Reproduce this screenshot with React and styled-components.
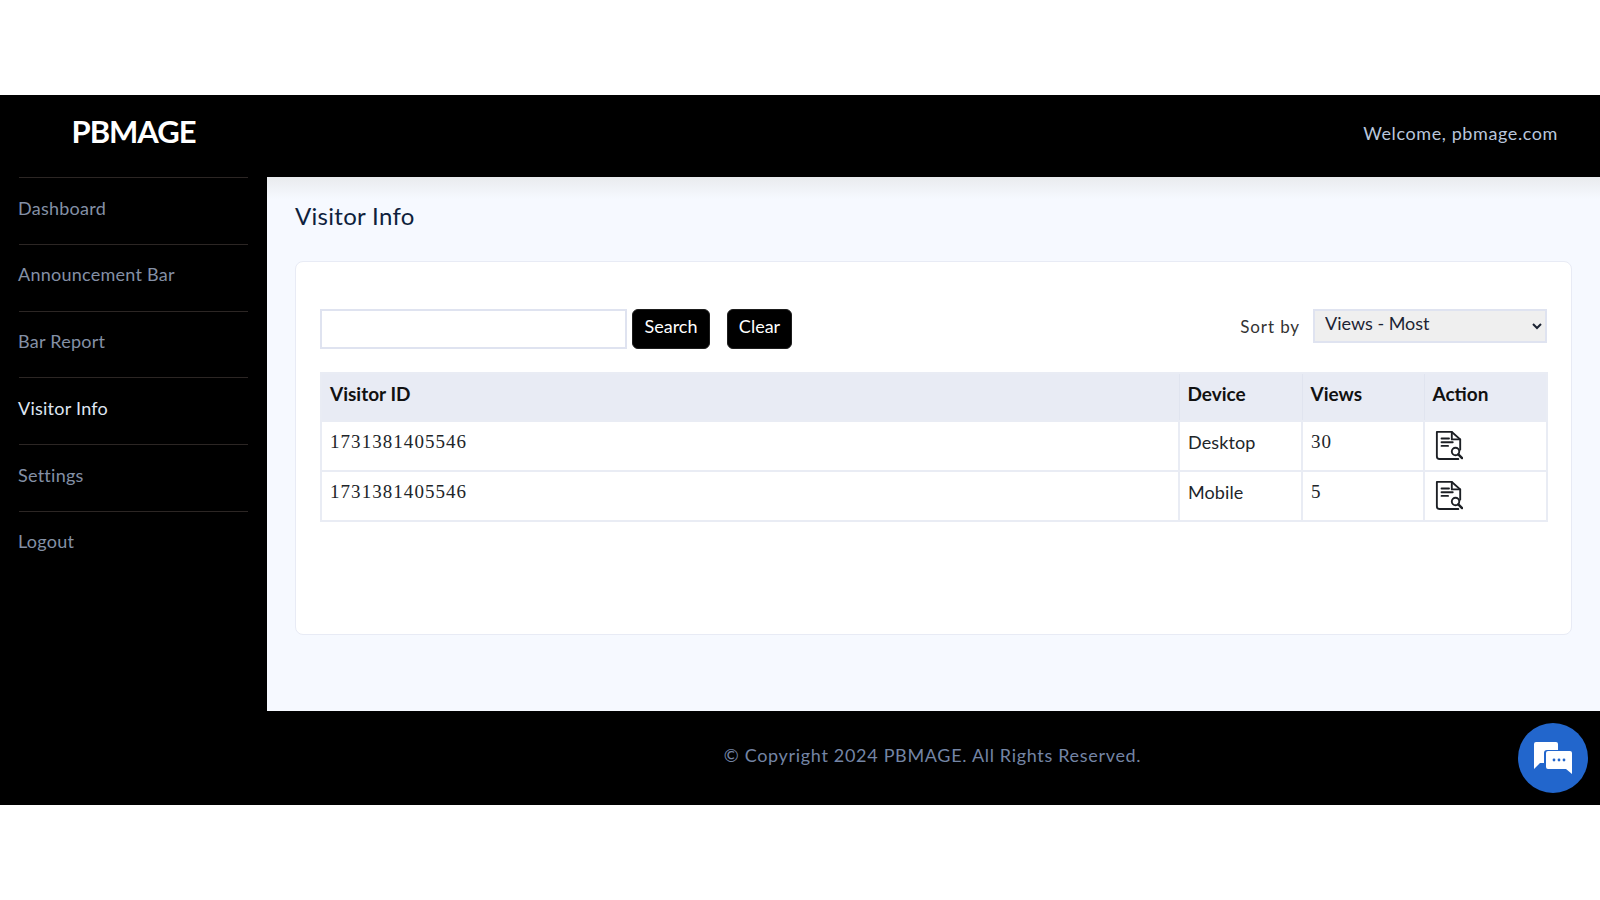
import React from 'react';
import styled, { createGlobalStyle } from 'styled-components';

const GlobalStyle = createGlobalStyle`
  html, body {
    margin: 0;
    padding: 0;
    background: #fff;
  }
  * {
    box-sizing: border-box;
  }
`;

const uiFont = `'Lato', 'Open Sans', sans-serif`;

const Page = styled.div`
  width: 1600px;
  height: 900px;
  padding-top: 95px;
  overflow: hidden;
  font-family: ${uiFont};
`;

const Shell = styled.div`
  position: relative;
  height: 710px;
  background: #000;
  display: grid;
  grid-template-columns: 267px 1fr;
  grid-template-rows: 82px 534px 94px;
`;

const Brand = styled.div`
  display: flex;
  justify-content: center;
  padding-top: 18px;
  font-size: 31px;
  line-height: 36px;
  font-weight: 700;
  letter-spacing: -1px;
  color: #fff;
`;

const TopBar = styled.header`
  display: flex;
  justify-content: flex-end;
  padding: 27px 42px 0 0;
  font-size: 18px;
  line-height: 22px;
  letter-spacing: 0.6px;
  color: #b9c6dc;
`;

const Sidebar = styled.nav`
  padding: 0 19px;
`;

const NavItem = styled.a`
  display: block;
  height: 66.8px;
  padding-top: 18.5px;
  border-top: 1px solid #2c2624;
  font-size: 18px;
  line-height: 22px;
  letter-spacing: 0.25px;
  text-indent: -1px;
  color: ${(p) => (p.$active ? '#dfe6f2' : '#8490a6')};
`;

const Main = styled.main`
  background: #f6f9ff;
  padding: 24px 28px 0;
  background-image: linear-gradient(#e9ebee, #f6f9ff 22px);
`;

const PageTitle = styled.h1`
  margin: 0 0 31px;
  height: 29px;
  font-size: 24px;
  line-height: 29px;
  font-weight: 400;
  letter-spacing: 0.3px;
  color: #0f1f3d;
`;

const Card = styled.section`
  width: 1277px;
  height: 374px;
  padding: 47px 24px 0;
  background: #fff;
  border: 1px solid #e8ebf5;
  border-radius: 8px;
`;

const Toolbar = styled.div`
  display: flex;
  align-items: flex-start;
  height: 63px;
`;

const SearchInput = styled.input`
  width: 307px;
  height: 40px;
  margin-right: 5px;
  border: 2px solid #dfe3f0;
  background: #fff;
`;

const ActionButton = styled.button`
  height: 40px;
  width: ${(p) => p.$width}px;
  margin-right: 17px;
  padding: 0 0 6px;
  background: #000;
  color: #fff;
  border: 1px solid #1d1d1d;
  border-radius: 6px;
  font-family: ${uiFont};
  font-size: 18px;
`;

const SortGroup = styled.div`
  margin-left: auto;
  display: flex;
  align-items: center;
  gap: 13px;
`;

const SortLabel = styled.label`
  font-size: 17px;
  letter-spacing: 0.9px;
  color: #333;
`;

const SortSelect = styled.select`
  width: 234px;
  height: 34px;
  padding: 0 0 6px 6px;
  background: #efefef;
  border: 2px solid #dfe3f0;
  border-radius: 0;
  font-family: ${uiFont};
  font-size: 18px;
  color: #1c2333;
`;

const Table = styled.table`
  width: 1226px;
  border-collapse: collapse;
  table-layout: fixed;
  border: 2px solid #e9ecf4;
`;

const HeadCell = styled.th`
  height: 48px;
  padding: 0 8px 8px;
  background: #e8ebf4;
  border-left: 1px solid #e0e4ef;
  text-align: left;
  font-size: 19px;
  font-weight: 700;
  color: #111;
`;

const Cell = styled.td`
  height: 50px;
  padding: 0 8px 8px;
  border: 2px solid #e9ecf4;
  font-size: ${(p) => (p.$serif ? '19px' : '18px')};
  color: #212529;
  letter-spacing: ${(p) => (p.$serif ? '1.05px' : '0.1px')};
  font-family: ${(p) => (p.$serif ? `'Liberation Serif', serif` : 'inherit')};
`;

const ReportIcon = styled.svg`
  display: block;
  width: 28px;
  height: 30px;
  margin: 6px 0 0 2px;
`;

const ChatBubble = styled.div`
  position: absolute;
  right: 12px;
  bottom: 12px;
  width: 70px;
  height: 70px;
  border-radius: 50%;
  background: #2266cc;
  display: flex;
  align-items: center;
  justify-content: center;
`;

const Footer = styled.footer`
  grid-column: 1 / -1;
  padding: 33px 0 0 265px;
  text-align: center;
  font-size: 18px;
  line-height: 22px;
  letter-spacing: 0.68px;
  color: #7485a5;
`;

const DocSearch = () => (
  <ReportIcon viewBox="0 0 30 32" fill="none" stroke="#1c1f24" strokeWidth="2" strokeLinecap="round" strokeLinejoin="round">
    <path d="M25 31H5a3 3 0 0 1-3-3V2h16l9 8v11" />
    <path d="M18 2v8h9" />
    <path d="M7 9h8M7 13h12" />
    <path d="M7 17h7" />
    <circle cx="22" cy="23" r="4" />
    <path d="M25 26l4 4" strokeWidth="2.6" />
  </ReportIcon>
);

const ChatIcon = () => (
  <svg width="38" height="32" viewBox="0 0 38 32">
    <path d="M2 0h20a2 2 0 0 1 2 2v6H13a3 3 0 0 0-3 3v10H6l-6 6V2a2 2 0 0 1 2-2z" fill="#fff" />
    <path d="M14 9h22a2 2 0 0 1 2 2v21l-6-5H14a2 2 0 0 1-2-2V11a2 2 0 0 1 2-2z" fill="#fff" />
    <circle cx="20" cy="18" r="1.4" fill="#2266cc" />
    <circle cx="25" cy="18" r="1.4" fill="#2266cc" />
    <circle cx="30" cy="18" r="1.4" fill="#2266cc" />
  </svg>
);

const navItems = ['Dashboard', 'Announcement Bar', 'Bar Report', 'Visitor Info', 'Settings', 'Logout'];

const visitors = [
  { id: '1731381405546', device: 'Desktop', views: 30 },
  { id: '1731381405546', device: 'Mobile', views: 5 },
];

export default function App() {
  return (
    <Page>
      <GlobalStyle />
      <Shell>
        <Brand>PBMAGE</Brand>
        <TopBar>Welcome, pbmage.com</TopBar>
        <Sidebar>
          {navItems.map((item) => (
            <NavItem key={item} $active={item === 'Visitor Info'}>{item}</NavItem>
          ))}
        </Sidebar>
        <Main>
          <PageTitle>Visitor Info</PageTitle>
          <Card>
            <Toolbar>
              <SearchInput />
              <ActionButton $width={78}>Search</ActionButton>
              <ActionButton $width={65}>Clear</ActionButton>
              <SortGroup>
                <SortLabel>Sort by</SortLabel>
                <SortSelect defaultValue="most">
                  <option value="most">Views - Most</option>
                </SortSelect>
              </SortGroup>
            </Toolbar>
            <Table>
              <colgroup>
                <col style={{ width: 858 }} />
                <col style={{ width: 123 }} />
                <col style={{ width: 122 }} />
                <col style={{ width: 123 }} />
              </colgroup>
              <thead>
                <tr>
                  <HeadCell>Visitor ID</HeadCell>
                  <HeadCell>Device</HeadCell>
                  <HeadCell>Views</HeadCell>
                  <HeadCell>Action</HeadCell>
                </tr>
              </thead>
              <tbody>
                {visitors.map((v) => (
                  <tr key={v.device}>
                    <Cell $serif>{v.id}</Cell>
                    <Cell>{v.device}</Cell>
                    <Cell $serif>{v.views}</Cell>
                    <Cell><DocSearch /></Cell>
                  </tr>
                ))}
              </tbody>
            </Table>
          </Card>
        </Main>
        <Footer>© Copyright 2024 PBMAGE. All Rights Reserved.</Footer>
        <ChatBubble><ChatIcon /></ChatBubble>
      </Shell>
    </Page>
  );
}
